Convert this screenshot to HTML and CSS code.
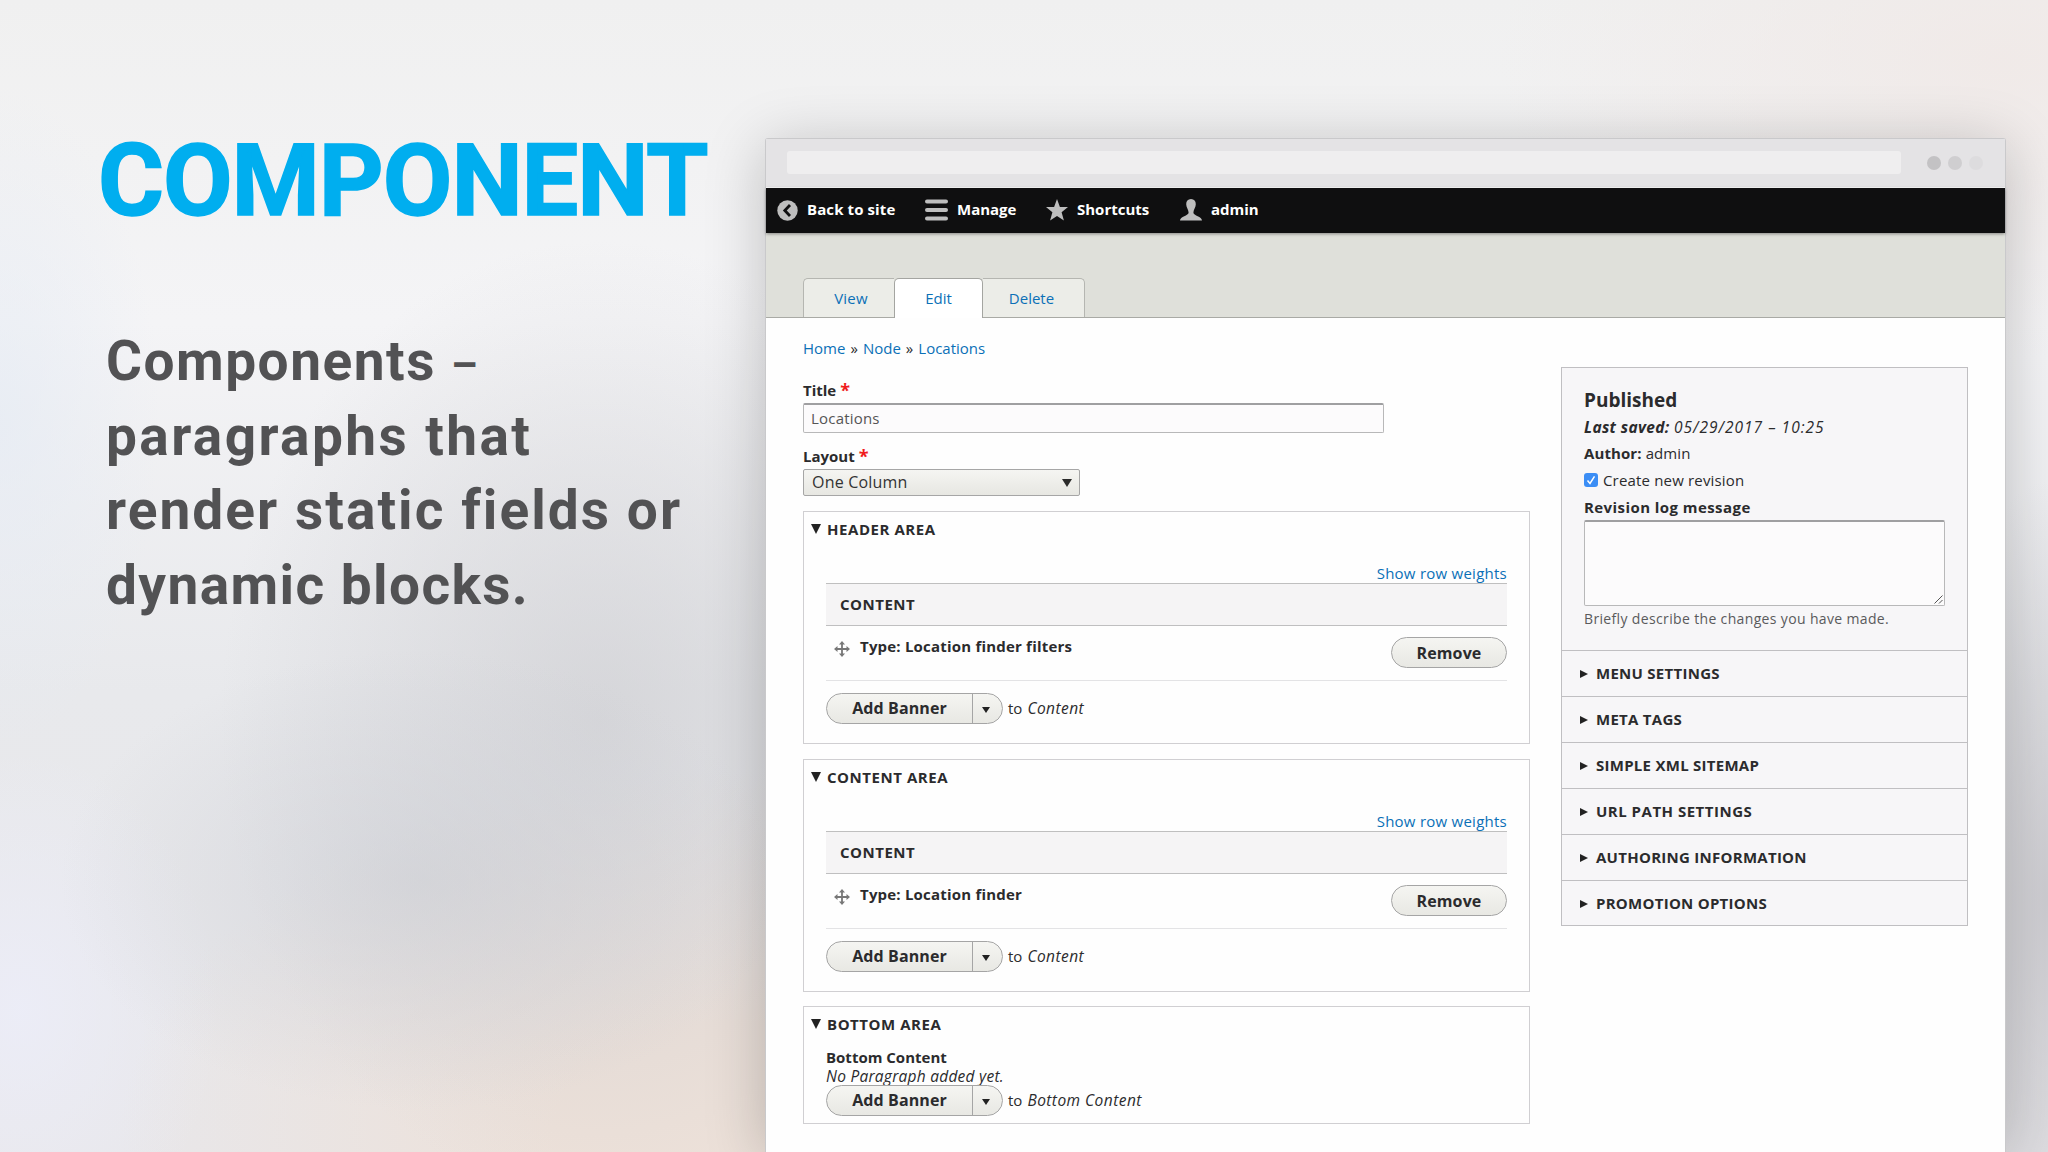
FILE: index.html
```html
<!DOCTYPE html>
<html lang="en">
<head>
<meta charset="utf-8">
<title>Component</title>
<link rel="stylesheet" href="styles.css">
</head>
<body>
<main class="slide">
  <section class="intro">
    <h1>COMPONENT</h1>
    <p><span class="l1">Components <small>–</small></span><span class="l2">paragraphs that</span><span class="l3">render static fields or</span><span class="l4">dynamic blocks.</span></p>
  </section>
  <section class="window">
    <div class="chrome"><div class="address"></div><div class="dots"><i></i><i></i><i></i></div></div>
    <nav class="toolbar">
      <a class="t-back"><svg width="21" height="21" viewBox="0 0 21 21"><circle cx="10.5" cy="10.5" r="10.2" fill="#bebebe"/><path d="M13 5 7.8 10.5 13 16" fill="none" stroke="#0f0f10" stroke-width="2.8"/></svg><span>Back to site</span></a>
      <a class="t-manage"><svg width="23" height="22" viewBox="0 0 23 22"><path d="M0 2.5Q0 .4 2 .4H21Q23 .4 23 2.5T21 4.6H2Q0 4.6 0 2.5M0 11Q0 8.9 2 8.9H21Q23 8.9 23 11T21 13.1H2Q0 13.1 0 11M0 19.5Q0 17.4 2 17.4H21Q23 17.4 23 19.5T21 21.6H2Q0 21.6 0 19.5" fill="#bebebe"/></svg><span>Manage</span></a>
      <a class="t-short"><svg width="22" height="22" viewBox="0 0 22 22"><path d="m11 0 2.9 7.9 8.1.2-6.400 5.100L17.900 21.500 11 16.900 4.100 21.500 6.400 13.200 0 8.100l8.100-.2z" fill="#bebebe"/></svg><span>Shortcuts</span></a>
      <a class="t-admin"><svg width="22" height="22" viewBox="0 0 22 22"><path d="M11 0C14.200 0 15.800 2.100 15.800 5.200 15.800 8.200 13.400 11 13.400 13.400 13.400 16.800 22 17 22 21.600H0C0 17 8.600 16.800 8.600 13.400 8.600 11 6.200 8.200 6.200 5.200 6.200 2.100 7.800 0 11 0Z" fill="#bebebe"/></svg><span>admin</span></a>
    </nav>
    <header class="head"><div class="tab view">View</div><div class="tab active">Edit</div><div class="tab delete">Delete</div></header>
    <div class="body">
      <div class="content">
        <div class="crumbs"><a>Home</a><b>»</b><a>Node</a><b>»</b><a>Locations</a></div>
        <label class="lbl title"><span>Title</span><em>*</em></label>
        <div class="input">Locations</div>
        <label class="lbl layout"><span>Layout</span><em>*</em></label>
        <div class="select"><span>One Column</span><svg width="10" height="8"><path d="M0 0H10L5 8Z" fill="#2b2b2b"/></svg></div>

        <section class="area">
          <h2><i></i><span>HEADER AREA</span></h2>
          <a class="weights">Show row weights</a>
          <div class="th">CONTENT</div>
          <div class="row"><svg class="move" width="16" height="16" viewBox="0 0 16 16"><path d="M8 2V14M2 8H14" stroke="#777" stroke-width="1.800"/><path d="m8 0 3 3.500H5zM8 16l3-3.500H5zM0 8l3.500-3v6zM16 8l-3.500-3v6z" fill="#777"/></svg><strong>Type: Location finder filters</strong><button class="btn">Remove</button></div>
          <div class="add"><button class="split"><span>Add Banner</span><i></i></button><span class="to">to</span><em>Content</em></div>
        </section>
        <section class="area">
          <h2><i></i><span>CONTENT AREA</span></h2>
          <a class="weights">Show row weights</a>
          <div class="th">CONTENT</div>
          <div class="row"><svg class="move" width="16" height="16" viewBox="0 0 16 16"><path d="M8 2V14M2 8H14" stroke="#777" stroke-width="1.800"/><path d="m8 0 3 3.500H5zM8 16l3-3.500H5zM0 8l3.500-3v6zM16 8l-3.500-3v6z" fill="#777"/></svg><strong>Type: Location finder</strong><button class="btn">Remove</button></div>
          <div class="add"><button class="split"><span>Add Banner</span><i></i></button><span class="to">to</span><em>Content</em></div>
        </section>
        <section class="area third">
          <h2><i></i><span>BOTTOM AREA</span></h2>
          <strong class="bc">Bottom Content</strong>
          <em class="none">No Paragraph added yet.</em>
          <div class="add"><button class="split"><span>Add Banner</span><i></i></button><span class="to">to</span><em>Bottom Content</em></div>
        </section>
      </div>
      <aside class="side">
        <div class="meta">
          <h3>Published</h3>
          <p class="saved"><b>Last saved:</b> <span>05/29/2017 – 10:25</span></p>
          <p class="author"><b>Author:</b> admin</p>
          <p class="check"><svg width="14" height="14"><rect width="14" height="14" rx="3" fill="#3b8df5"/><path d="m3.500 7.400 2.500 3 4.500-7" fill="none" stroke="#fff" stroke-width="1.500"/></svg><span>Create new revision</span></p>
          <p class="log"><b>Revision log message</b></p>
          <div class="textarea"><svg width="9" height="9"><path d="M.5 8.500 8.500.5M5 8.500 8.500 5" stroke="#555" fill="none"/></svg></div>
          <p class="hint">Briefly describe the changes you have made.</p>
        </div>
        <div class="item"><i></i><span>MENU SETTINGS</span></div>
        <div class="item"><i></i><span>META TAGS</span></div>
        <div class="item"><i></i><span>SIMPLE XML SITEMAP</span></div>
        <div class="item"><i></i><span>URL PATH SETTINGS</span></div>
        <div class="item"><i></i><span>AUTHORING INFORMATION</span></div>
        <div class="item"><i></i><span>PROMOTION OPTIONS</span></div>
      </aside>
    </div>
  </section>
</main>
</body>
</html>
```
FILE: styles.css
```css
* { box-sizing: border-box; }
body { margin: 0; font-family: "Open Sans", "Noto Sans", sans-serif; font-size: 15px; color: #2b2b2d; }
h1, h2, h3, p { margin: 0; }
i { font-style: normal; }
.slide {
  width: 2048px; height: 1152px; overflow: hidden; display: flex; align-items: flex-start;
  background:
    radial-gradient(ellipse 360px 230px at 420px 880px, rgba(203,205,211,.6), rgba(205,206,211,0)),
    radial-gradient(ellipse 380px 480px at 600px 720px, rgba(202,202,206,.62), rgba(215,215,219,0)),
    radial-gradient(ellipse 620px 360px at 740px 1130px, rgba(237,225,217,1) 30%, rgba(236,224,216,0)),
    radial-gradient(ellipse 200px 260px at 20px 1010px, rgba(236,237,248,.9), rgba(236,237,248,0)),
    radial-gradient(ellipse 160px 330px at 0 420px, rgba(229,235,244,.7), rgba(226,231,243,0)),
    radial-gradient(ellipse 120px 420px at 2048px 900px, rgba(198,197,202,.8), rgba(205,204,208,0)),
    radial-gradient(ellipse 500px 300px at 2000px 60px, rgba(240,233,231,.9), rgba(240,234,232,0)),
    linear-gradient(#f0f0f0 0, #f4f4f6 28%, #e8e9ec 60%, #e8e7ea 100%);
}
.intro { width: 765px; padding-left: 98px; font-family: Roboto, sans-serif; font-weight: 700; white-space: nowrap; }
.intro h1 { margin-top: 121px; color: #00aeef; font-size: 101px; line-height: 120px; letter-spacing: -1.100px; -webkit-text-stroke: 1.500px #00aeef; }
.intro p { margin: 83px 0 0 8px; font-size: 55px; line-height: 74.700px; color: #525254; }
.intro p span { display: block; height: 74.700px; }
.intro small { font-size: 42px; line-height: 1; }
.l1 { letter-spacing: 1.500px; }
.l2 { letter-spacing: 2.400px; }
.l3 { letter-spacing: 2.050px; }
.l4 { letter-spacing: 1.400px; }
.window { width: 1241px; height: 1014px; margin-top: 138px; background: #fefefe; border: 1px solid #c9c9cb; border-bottom: 0; border-radius: 3px 3px 0 0; box-shadow: 0 8px 60px rgba(0,0,0,.22); white-space: nowrap; }
.chrome { height: 49px; display: flex; align-items: center; padding: 0 22px 1px 21px; background: #e4e3e5; border-bottom: 1px solid #fff; justify-content: space-between; }
.address { width: 1114px; height: 23px; border-radius: 3px; background: #efeeef; }
.dots { display: flex; gap: 7px; }
.dots i { width: 14px; height: 14px; border-radius: 50%; background: #c3c2c4; }
.dots i:nth-child(2) { background: #cfced0; }
.dots i:nth-child(3) { background: #dddcde; }
.toolbar { height: 45px; background: #0f0f10; display: flex; align-items: center; color: #fff; font-weight: 700; padding: 0 0 1px 11px; position: relative; box-shadow: 0 1px 3px rgba(0,0,0,.4); }
.toolbar a { display: flex; align-items: center; gap: 9px; }
.toolbar span { padding-bottom: 2px; }
.t-back { width: 148px; letter-spacing: .1px; }
.t-manage { width: 121px; }
.t-short { width: 134px; }
.head { height: 85px; background: #dfe0da; border-bottom: 1px solid #a9aaa5; display: flex; align-items: flex-end; padding-left: 37px; }
.tab { height: 39px; border: 1px solid #b5b6b1; border-bottom: 0; border-radius: 5px 5px 0 0; background: #ecede8; color: #0b70b7; text-align: center; line-height: 39px; }
.tab.view { width: 91px; border-right: 0; border-top-right-radius: 0; padding-left: 4px; letter-spacing: .2px; }
.tab.active { width: 89px; height: 40px; margin-bottom: -1px; background: #fff; border-color: #a4a5a1; }
.tab.delete { width: 102px; border-left: 0; border-top-left-radius: 0; padding-right: 4px; }
.body { display: flex; padding-left: 37px; }
.content { width: 758px; }
.crumbs { display: flex; margin-top: 18px; height: 24px; line-height: 24px; }
.crumbs a, .weights { color: #0b70b7; }
.crumbs b { font-weight: 400; width: 17.500px; text-align: center; }
.lbl { display: flex; gap: 5px; font-weight: 700; line-height: 20px; height: 22px; }
.lbl em { color: #f01c1c; font-style: normal; font-size: 18px; margin-left: -1px; }
.lbl em { margin-top: -1px; }
.lbl span { margin-top: -1px; }
.title { margin-top: 21px; }
.input { width: 581px; height: 30px; border: 1px solid #b8b8b9; border-top: 2px solid #9f9fa1; border-radius: 2px; background: #fcfbfc; padding-left: 7px; line-height: 27px; color: #555; letter-spacing: .2px; }
.layout { margin-top: 14px; }
.select { width: 277px; height: 27px; border: 1px solid #a6a6a6; border-radius: 2px; background: linear-gradient(#f5f5f2, #e7e7e2); display: flex; align-items: center; justify-content: space-between; padding: 0 7px 0 8px; font-size: 16px; color: #333; letter-spacing: .2px; }
.select span { margin-top: -1px; }
.area { width: 727px; height: 233px; margin-top: 15px; border: 1px solid #d0cfd2; padding: 0 22px; }
.area h2 { font-size: 15px; line-height: 20px; height: 20px; display: flex; align-items: center; gap: 6px; margin: 7px 0 0 -15px; letter-spacing: .55px; }
.area h2 i { border: 5px solid transparent; border-top: 10px solid #222; border-bottom: 0; }
.area h2 span { margin-top: -1px; }
.weights { display: block; text-align: right; margin-top: 23px; height: 21px; line-height: 22px; letter-spacing: .25px; }
.th { height: 43px; border-top: 1px solid #bfbfbf; border-bottom: 1px solid #bfbfc0; background: #f5f4f5; padding-left: 14px; line-height: 40px; font-weight: 700; letter-spacing: .5px; }
.row { height: 55px; border-bottom: 1px solid #e3e3e5; display: flex; align-items: flex-start; padding-left: 8px; }
.move { margin-top: 15px; }
.row strong { margin: 9px auto 0 10px; line-height: 22px; letter-spacing: .2px; }
.btn, .split { height: 31px; margin: 0; padding: 0; border: 1px solid #a5a5a5; border-radius: 16px; background: linear-gradient(#f5f5f2, #e8e8e3); color: #2b2b2d; font: 700 16px "Open Sans", sans-serif; letter-spacing: .1px; }
.btn { width: 116px; margin-top: 11px; }
.add { display: flex; align-items: center; margin-top: 12px; }
.split { width: 177px; display: flex; align-items: stretch; line-height: 29px; }
.split span { width: 146px; border-right: 1px solid #a5a5a5; }
.split i { margin: 13px 0 0 9px; height: 0; border: 4.500px solid transparent; border-top: 6px solid #222; border-bottom: 0; }
.to { margin: 0 5px 2px 5px; }
.add em { font-size: 15.500px; letter-spacing: .45px; margin-bottom: 2px; }
.third { height: 118px; margin-top: 14px; }
.bc { display: block; line-height: 20px; margin-top: 13px; }
.none { display: block; font-size: 15.500px; line-height: 20px; margin-top: -1px; letter-spacing: .25px; }
.third .add { margin-top: -1px; }
.side { width: 407px; height: 559px; margin-top: 49px; border: 1px solid #c0bfc2; background: #f7f6f8; }
.meta { height: 282px; padding: 19px 22px 0; }
.meta h3 { font-size: 19px; line-height: 26px; }
.meta p { line-height: 26px; }
.meta .saved { font-style: italic; font-size: 15.500px; margin-top: 1px; letter-spacing: .35px; }
.saved span { letter-spacing: 1px; }
.author { letter-spacing: .1px; }
.check { display: flex; align-items: center; gap: 5px; margin-top: 1px; letter-spacing: .17px; }
.meta .log { margin-top: 1px; letter-spacing: .43px; }
.textarea { width: 361px; height: 86px; border: 1px solid #b8b8b9; border-top: 2px solid #9f9fa1; border-radius: 2px; background: #fcfbfc; display: flex; align-items: flex-end; justify-content: flex-end; padding: 1px; }
.hint { color: #5a5a5c; font-size: 14px; letter-spacing: .35px; }
.item { height: 46px; border-top: 1px solid #c0bfc2; padding-left: 18px; display: flex; align-items: center; gap: 8px; font-weight: 700; letter-spacing: .27px; }
.item:nth-of-type(5) { letter-spacing: .5px; }
.item span { padding-bottom: 1px; }
.item i { border: 4.500px solid transparent; border-left: 8px solid #222; border-right: 0; }
```
